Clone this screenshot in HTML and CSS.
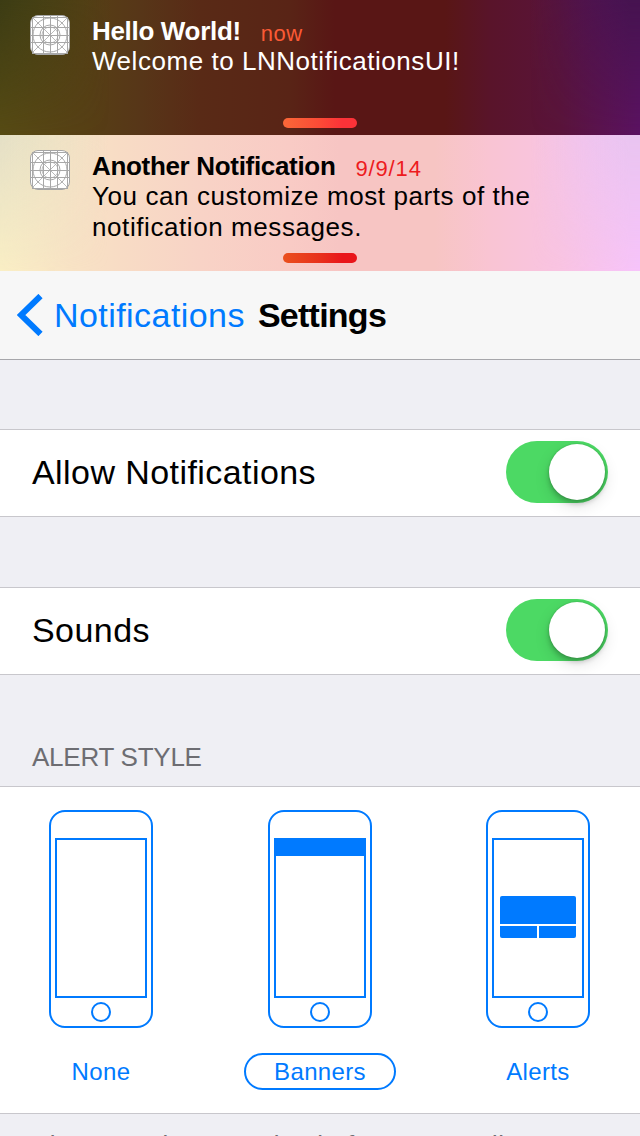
FILE: index.html
```html
<!DOCTYPE html>
<html lang="en">
<head>
<meta charset="utf-8">
<title>Settings</title>
<link rel="stylesheet" href="styles.css">
</head>
<body>
<svg width="0" height="0" class="defs" aria-hidden="true">
  <symbol id="app-icon" viewBox="0 0 40 40">
    <rect x=".5" y=".5" width="39" height="39" rx="7.5" fill="#fff" stroke="#a5a5a5"/>
    <g fill="none" stroke="#a8a8a8" stroke-width="1">
      <path d="M2.500 2v36M13.500 0v40M20.500 0v40M27.500 0v40M37.500 2v36M2 2.500h36M0 12.500h40M0 20.500h40M0 27.500h40M2 38.500h36"/>
      <path d="M3 3l34 34M37 3L3 37" stroke-width=".8"/>
      <circle cx="20" cy="20" r="17"/>
      <circle cx="20" cy="20" r="10"/>
      <circle cx="20" cy="20" r="8" stroke-width=".7"/>
    </g>
  </symbol>
</svg>
<div class="screen">
  <section class="banner banner-dark">
    <svg class="app-icon"><use href="#app-icon"/></svg>
    <div class="banner-body">
      <div class="banner-head"><strong>Hello World!</strong><time class="now">now</time></div>
      <p>Welcome to LNNotificationsUI!</p>
    </div>
    <span class="grabber"></span>
  </section>
  <section class="banner banner-light">
    <svg class="app-icon"><use href="#app-icon"/></svg>
    <div class="banner-body">
      <div class="banner-head"><strong>Another Notification</strong><time class="date">9/9/14</time></div>
      <p>You can customize most parts of the<br>notification messages.</p>
    </div>
    <span class="grabber"></span>
  </section>
  <header class="navbar">
    <svg class="chevron" viewBox="0 0 26 42"><path d="M23.500 2L4 21l19.500 19" fill="none" stroke="#007aff" stroke-width="6"/></svg>
    <span class="back">Notifications</span>
    <h1>Settings</h1>
  </header>
  <main>
    <div class="row"><span class="row-label">Allow Notifications</span><span class="switch"><span class="knob"></span></span></div>
    <div class="row"><span class="row-label">Sounds</span><span class="switch"><span class="knob"></span></span></div>
    <h2>ALERT STYLE</h2>
    <div class="styles">
      <div class="style">
        <div class="phone"><div class="display"></div><div class="home"></div></div>
        <span class="label">None</span>
      </div>
      <div class="style">
        <div class="phone"><div class="display"><div class="strip"></div></div><div class="home"></div></div>
        <span class="label selected">Banners</span>
      </div>
      <div class="style">
        <div class="phone"><div class="display centered"><div class="dialog"><i></i><i></i><i></i></div></div><div class="home"></div></div>
        <span class="label">Alerts</span>
      </div>
    </div>
    <p class="footnote">Alerts require an action before proceeding.</p>
  </main>
</div>
</body>
</html>
```
FILE: styles.css
```css
* { box-sizing: border-box; }
body, h1, h2, p { margin: 0; font-weight: normal; }
body { font-family: "Liberation Sans", Arial, sans-serif; color: #000; overflow: hidden; }
.defs { display: none; }
.screen { width: 640px; height: 1136px; overflow: hidden; background: #efeff4; white-space: nowrap; }

.banner { position: relative; display: flex; height: 135px; padding: 15px 30px 0; }
.banner::before {
  content: ""; position: absolute; inset: 0;
  -webkit-mask-image: linear-gradient(#000, transparent);
  mask-image: linear-gradient(#000, transparent);
}
.banner-dark {
  color: #fff;
  background: linear-gradient(90deg, #574b14 0, #573f15 90px, #573618 140px, #592a16 200px, #592416 290px, #591615 335px, #591615 445px, #59142a 490px, #5a143a 560px, #5b1262 640px);
}
.banner-dark::before { background: linear-gradient(90deg, #3c3c14, rgba(70,56,20,0) 110px, rgba(80,18,60,0) 530px, #461350 630px); }
.banner-light {
  height: 136px;
  background: linear-gradient(90deg, #faefc5 0, #f8e3c5 70px, #f8dcc5 120px, #f8d3c6 200px, #f9cbc5 290px, #f7c5c3 340px, #f7c5c3 435px, #f9c4d3 490px, #f9c4e2 560px, #f7c4fb 640px);
}
.banner-light::before { background: linear-gradient(90deg, #e4dfc6, rgba(240,220,197,0) 110px, rgba(245,196,220,0) 530px, #e9c4f0 630px); }

.app-icon { position: relative; width: 40px; height: 40px; margin-right: 22px; flex: none; }
.banner-body { position: relative; margin-top: 1px; font-size: 26px; line-height: 31px; letter-spacing: .54px; }
.banner-light p { letter-spacing: .58px; }
.banner-head { display: flex; height: 30px; letter-spacing: -.32px; }
.banner-head time { margin-left: 20px; padding-top: 2px; font-size: 22px; }
.now { color: #fb5a35; letter-spacing: .5px; }
.date { color: #ed1b20; letter-spacing: .85px; }
.grabber { position: absolute; left: 283px; bottom: 7px; width: 74px; height: 10px; border-radius: 5px; background: linear-gradient(90deg, #fa6838, #fb4a36 50%, #fc3238 80%); }
.banner-light .grabber { bottom: 8px; background: linear-gradient(90deg, #ea501e, #e8301b 50%, #e9161b 80%); }

.navbar { display: flex; height: 89px; padding-left: 17px; background: #f7f7f7; border-bottom: 1px solid #a7a7ab; font-size: 34px; line-height: 88px; }
.chevron { width: 26px; height: 42px; margin: 23px 11px 0 0; }
.back { color: #007aff; letter-spacing: .44px; }
h1 { margin-left: 13px; font-size: 34px; font-weight: bold; letter-spacing: -.75px; }

.row { display: flex; align-items: center; justify-content: space-between; height: 88px; margin-top: 69px; padding: 0 32px 2px; background: #fff; border: solid #c8c7cc; border-width: 1px 0; font-size: 34px; }
.row + .row { margin-top: 70px; }
.row-label { letter-spacing: .43px; }
.switch { display: flex; justify-content: flex-end; width: 102px; height: 62px; padding: 3px; border-radius: 31px; background: #4cd964; }
.knob { width: 56px; height: 56px; border-radius: 50%; background: #fff; box-shadow: 0 6px 16px rgba(0,0,0,.12), 0 4px 5px rgba(0,0,0,.2), 0 0 2px rgba(0,0,0,.2); }

h2 { height: 111px; padding: 67px 32px 0; font-size: 26px; line-height: 30px; letter-spacing: -.25px; color: #6d6d72; }
.styles { display: grid; grid-template-columns: 219px 218px 152px; height: 328px; padding: 23px 0 0 25px; background: #fff; border: solid #c8c7cc; border-width: 1px 0; }
.style { display: flex; flex-direction: column; align-items: center; width: 152px; color: #007aff; }
.phone { display: flex; flex-direction: column; align-items: center; width: 104px; height: 218px; padding-top: 26px; border: 2px solid #007aff; border-radius: 16px; }
.display { width: 92px; height: 160px; border: 2px solid #007aff; }
.strip { height: 16px; background: #007aff; }
.centered { padding: 56px 6px 0; }
.dialog { display: grid; grid-template: 28px 12px / 37px 37px; gap: 2px; border-radius: 2px; overflow: hidden; }
.dialog i { background: #007aff; }
.dialog i:first-child { grid-column: span 2; }
.home { width: 20px; height: 20px; margin-top: 4px; border: 2px solid #007aff; border-radius: 50%; }
.label { width: 152px; height: 37px; margin-top: 25px; font-size: 24px; line-height: 37px; letter-spacing: .35px; text-align: center; }
.selected { border: 2px solid #007aff; border-radius: 18.5px; line-height: 33px; }
.footnote { padding: 14px 32px 0; font-size: 26px; line-height: 34px; letter-spacing: .43px; color: #6d6d72; }
```
